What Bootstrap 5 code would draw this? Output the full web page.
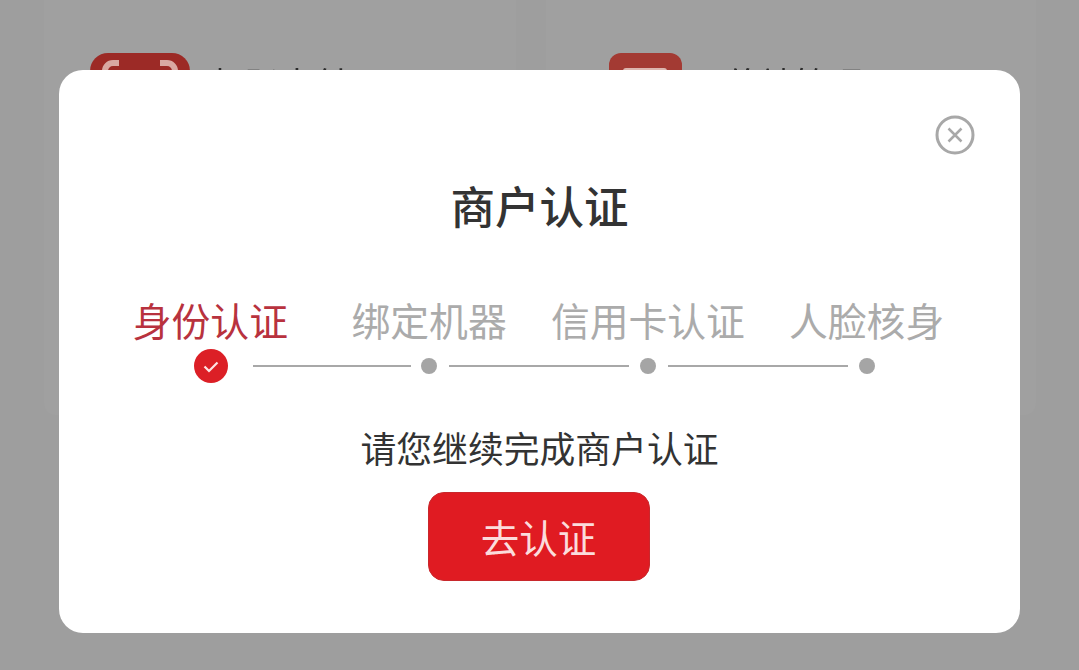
<!doctype html>
<html lang="zh"><head><meta charset="utf-8">
<link href="https://cdn.jsdelivr.net/npm/bootstrap@5.3.0/dist/css/bootstrap.min.css" rel="stylesheet">
<style>
html,body{height:670px;overflow:hidden}
body{background:#9e9e9e;font-family:"Noto Sans CJK SC","Liberation Sans",sans-serif}
.scene{height:670px;position:relative;overflow:hidden;filter:blur(.6px)}
.backrow{padding-left:44px;gap:30px}
.backpanel{width:472px;height:415px;background:#a0a0a0;border-radius:0 0 12px 12px;padding:53px 0 0 46px;gap:22px;flex:none}
.backpanel-b{width:490px;padding-left:63px;gap:45px}
.backicon{flex:none;display:block}
.backtext{font-size:34px;line-height:44px;color:#2c2c2c;margin-top:8px;white-space:nowrap}
.dialog{position:absolute;left:59px;top:70px;width:961px;height:563px;background:#fff;border-radius:24px}
.closer{position:absolute;right:44px;top:44px;width:42px;height:42px}
.dialog-title{font-size:44.5px;line-height:60px;font-weight:500;color:#333;padding-top:105px;margin:0}
.steptitles{margin-top:58px;padding-left:42px;padding-right:44px}
.steptitle{flex:1 1 0;font-size:38.8px;line-height:52px;color:#ababab;white-space:nowrap}
.steptitle-on{color:#b8323e}
.track{padding-left:135px;margin-top:4px;height:34px}
.tick{width:34px;height:34px;flex:none;display:block}
.rule{height:2px;background:#a8a8a8;width:180px;margin:0 11px 0 12px;flex:none}
.rule-first{width:158px;margin-left:25px;margin-right:10px}
.dot{width:16px;height:16px;border-radius:50%;background:#a5a5a5;flex:none}
.msg{font-size:35.8px;line-height:48px;color:#333;margin:40px 0 0;white-space:nowrap}
.go{width:222px;height:89px;border-radius:16px;background:#e01b22;border:1px solid #c8282c;color:#fbdcdc;font-size:38.5px;line-height:1;margin:21px 2px 0 0;padding:0}
.go:hover{background:#e01b22;color:#fbdcdc;border-color:#c8282c}
</style></head><body>
<div class="scene">
<div class="backrow d-flex">
<div class="backpanel d-flex align-items-start">
<svg class="backicon" width="100" height="60" viewBox="0 0 100 60"><rect width="100" height="60" rx="18" fill="#9c2a26"/><path d="M15 20V18a8 8 0 0 1 8-8h6M70 10h7a8 8 0 0 1 8 8v2" fill="none" stroke="#d9a8a2" stroke-width="6"/></svg>
<div class="backtext">扫码支付</div>
</div>
<div class="backpanel backpanel-b d-flex align-items-start">
<svg class="backicon" width="73" height="60" viewBox="0 0 73 60"><rect width="73" height="60" rx="12" fill="#a33a33"/><rect x="14" y="15" width="44" height="30" rx="3" fill="#dcb5ae"/></svg>
<div class="backtext">终端管理</div>
</div>
</div>
<div class="dialog text-center">
<svg class="closer" viewBox="0 0 42 42" fill="none" stroke="#a8a8a8"><circle cx="21" cy="21" r="18" stroke-width="3"/><path d="M14.5 14.5l13 13M27.5 14.5l-13 13" stroke-width="2.5"/></svg>
<h1 class="dialog-title">商户认证</h1>
<div class="steptitles d-flex">
<div class="steptitle steptitle-on">身份认证</div>
<div class="steptitle">绑定机器</div>
<div class="steptitle">信用卡认证</div>
<div class="steptitle">人脸核身</div>
</div>
<div class="track d-flex align-items-center">
<svg class="tick" viewBox="0 0 34 34"><circle cx="17" cy="17" r="17" fill="#dc1f26"/><path d="M10.5 17.5l4.5 4.5 8.5-8.5" fill="none" stroke="#fde4e4" stroke-width="2.2"/></svg>
<div class="rule rule-first"></div><div class="dot"></div>
<div class="rule"></div><div class="dot"></div>
<div class="rule"></div><div class="dot"></div>
</div>
<p class="msg">请您继续完成商户认证</p>
<button type="button" class="btn go">去认证</button>
</div>
</div>
<script src="https://cdn.jsdelivr.net/npm/bootstrap@5.3.0/dist/js/bootstrap.bundle.min.js"></script>
</body></html>
